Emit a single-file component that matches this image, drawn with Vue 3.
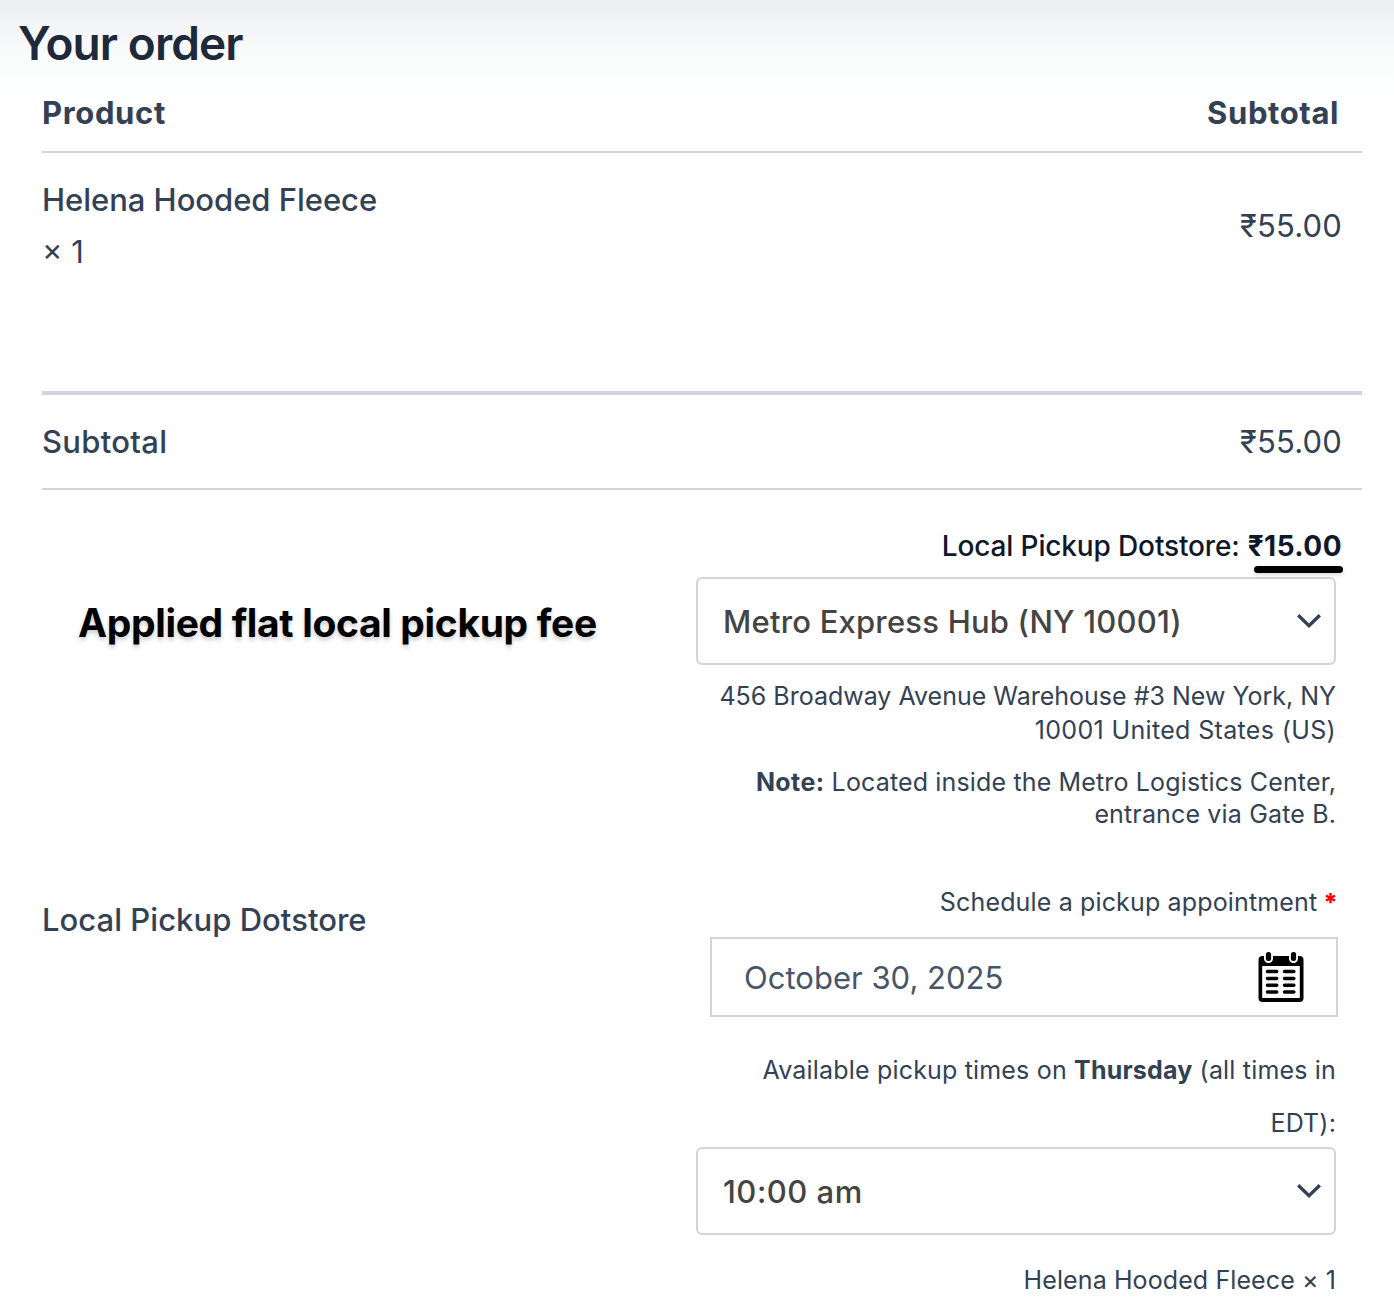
<script setup>
import { ref } from 'vue'

const item = { name: 'Helena Hooded Fleece', qty: 1, total: '₹55.00' }
const subtotal = '₹55.00'
const fee = '₹15.00'
const location = ref('Metro Express Hub (NY 10001)')
const date = ref('October 30, 2025')
const time = ref('10:00 am')

// rows of dashes on the calendar page
const calendarRows = [19.5, 26.5, 33.2, 40]
</script>

<template>
  <div class="checkout">
    <h3 class="title">Your order</h3>
    <div class="order">
      <div class="row head">
        <span class="head-product">Product</span>
        <span class="head-subtotal">Subtotal</span>
      </div>

      <div class="row item">
        <div>
          <div class="item-name">{{ item.name }}</div>
          <div class="item-qty">× {{ item.qty }}</div>
        </div>
        <span class="price">{{ item.total }}</span>
      </div>

      <div class="row subtotal">
        <span class="subtotal-label">Subtotal</span>
        <span class="price">{{ subtotal }}</span>
      </div>

      <div class="shipping">
        <div class="shipping-label">
          <span>Local Pickup Dotstore</span>
          <span class="callout">Applied flat local pickup fee</span>
        </div>

        <div class="pickup">
          <div class="fee">
            <span>Local Pickup Dotstore:</span>
            <strong class="fee-amount">{{ fee }}</strong>
          </div>

          <div class="select">
            <span class="location">{{ location }}</span>
            <svg class="chevron" viewBox="0 0 26 16" width="26" height="16">
              <path d="M2.2 2.2 13 12.6 23.8 2.2" fill="none" stroke="#334155" stroke-width="3.4" />
            </svg>
          </div>

          <div class="address">
            <div class="address-street">456 Broadway Avenue Warehouse #3 New York, NY</div>
            <div class="address-city">10001 United States (US)</div>
          </div>
          <div class="note">
            <div><strong>Note:</strong> Located inside the Metro Logistics Center,</div>
            <div>entrance via Gate B.</div>
          </div>

          <div class="schedule">
            <span>Schedule a pickup appointment</span>
            <span class="required">*</span>
          </div>
          <div class="date">
            <span>{{ date }}</span>
            <svg class="calendar" viewBox="0 0 46 50" width="46" height="50">
              <rect x="0.5" y="4" width="45" height="46" rx="4" fill="#000" />
              <rect x="4.2" y="14" width="37.6" height="32" fill="#fff" />
              <rect x="6" y="-2" width="9" height="13" rx="4.5" fill="#fff" />
              <rect x="31" y="-2" width="9" height="13" rx="4.5" fill="#fff" />
              <rect x="7.9" y="0" width="5.2" height="9" rx="2.5" fill="#000" />
              <rect x="32.9" y="0" width="5.2" height="9" rx="2.5" fill="#000" />
              <template v-for="y in calendarRows" :key="y">
                <path :d="`M9.5 ${y}h9.2M26.6 ${y}h9.2`" stroke="#000" stroke-width="3.6" stroke-linecap="round" />
              </template>
            </svg>
          </div>

          <div class="times">
            <div class="times-day">Available pickup times on <strong>Thursday</strong> (all times in</div>
            <div>EDT):</div>
          </div>
          <div class="select">
            <span class="time">{{ time }}</span>
            <svg class="chevron" viewBox="0 0 26 16" width="26" height="16">
              <path d="M2.2 2.2 13 12.6 23.8 2.2" fill="none" stroke="#334155" stroke-width="3.4" />
            </svg>
          </div>

          <div class="contents">{{ item.name }} × {{ item.qty }}</div>
        </div>
      </div>
    </div>
  </div>
</template>

<style>
body {
  background: #fff;
}
</style>

<style scoped>
.checkout {
  box-sizing: border-box;
  height: 1316px;
  overflow: hidden;
  background: linear-gradient(to bottom, #e9eef2 0, #f3f5f7 26px, #fafbfb 55px, #fdfefe 85px, #fff 115px);
  color: #334155;
  font-family: Inter, 'Liberation Sans', sans-serif;
  font-size: 31px;
  line-height: 52px;
}

.title {
  margin: 0;
  padding-left: 18px;
  color: #1e293b;
  font-size: 46px;
  font-weight: 600;
  line-height: 86px;
  letter-spacing: -0.9px;
}

.order {
  margin: 0 32px 0 42px;
}

.row {
  display: flex;
  align-items: center;
  justify-content: space-between;
  border-bottom: 2px solid #d1d5db;
}

.head {
  padding: 1px 23px 12px 0;
  font-weight: 700;
}

.head-product {
  letter-spacing: 0.65px;
}

.head-subtotal {
  letter-spacing: 0.6px;
}

.item {
  padding: 21px 20px 113px 0;
  border-bottom-width: 4px;
}

.item-name {
  font-weight: 450;
  letter-spacing: -0.03px;
}

.price {
  letter-spacing: 0.2px;
}

.subtotal {
  box-sizing: border-box;
  height: 95px;
  padding-right: 20px;
}

.subtotal-label {
  font-weight: 450;
  letter-spacing: 0.3px;
}

.shipping {
  display: flex;
  justify-content: space-between;
  height: 859px;
}

.shipping-label {
  position: relative;
  display: flex;
  align-items: center;
  font-weight: 450;
  letter-spacing: 0.04px;
}

/* note pinned beside the fee */
.callout {
  position: absolute;
  top: 107px;
  left: 36px;
  color: #000;
  font-size: 39px;
  font-weight: 700;
  letter-spacing: -0.35px;
  white-space: nowrap;
  text-shadow: 0 3px 4px rgba(0, 0, 0, 0.2);
}

.pickup {
  width: 640px;
  margin-right: 26px;
  padding-top: 30px;
  font-size: 25px;
  letter-spacing: 0.15px;
  text-align: right;
}

.fee {
  display: flex;
  gap: 8px;
  justify-content: flex-end;
  height: 57px;
  margin-right: -6px;
  color: #0f172a;
  font-size: 28px;
  font-weight: 450;
  letter-spacing: -0.14px;
}

.fee-amount {
  position: relative;
  font-weight: 700;
  letter-spacing: 0.45px;
}

.fee-amount::after {
  content: '';
  position: absolute;
  top: 46px;
  right: -1px;
  width: 89px;
  height: 7px;
  border-radius: 4px;
  background: #000;
  box-shadow: 0 2px 4px rgba(0, 0, 0, 0.15);
}

.select {
  display: flex;
  align-items: center;
  justify-content: space-between;
  box-sizing: border-box;
  height: 88px;
  padding: 1px 12px 0 25px;
  border: 2px solid #d1d5db;
  border-radius: 6px;
  background: #fff;
  color: #444;
  font-size: 31px;
  font-weight: 450;
}

.chevron {
  margin-top: -1px;
}

.location {
  letter-spacing: 0.2px;
}

.time {
  letter-spacing: 0.5px;
}

.address {
  padding-top: 14px;
  line-height: 34px;
}

.address-street {
  letter-spacing: 0;
  white-space: nowrap;
}

.address-city {
  letter-spacing: 0.35px;
}

.note {
  padding-top: 19px;
  line-height: 32px;
}

.note strong {
  letter-spacing: 0.4px;
}

.schedule {
  display: flex;
  gap: 8px;
  justify-content: flex-end;
  padding-top: 46px;
}

.schedule span:first-child {
  margin-right: -2px;
}

.required {
  margin-right: -2px;
  color: #f00;
  font-weight: 800;
}

.date {
  display: flex;
  align-items: center;
  justify-content: space-between;
  box-sizing: border-box;
  height: 80px;
  margin: 9px -2px 0 14px;
  padding: 2px 32px 0 32px;
  border: 2px solid #d1d5db;
  background: #fff;
  color: #475569;
  font-size: 31px;
  letter-spacing: 0.02px;
}

.calendar {
  margin-top: -2px;
}

.times {
  padding-top: 27px;
  line-height: 53px;
}

.times-day {
  letter-spacing: 0.18px;
  white-space: nowrap;
}

.times + .select {
  margin-top: -3px;
}

.contents {
  padding-top: 19px;
  letter-spacing: 0.1px;
}
</style>
